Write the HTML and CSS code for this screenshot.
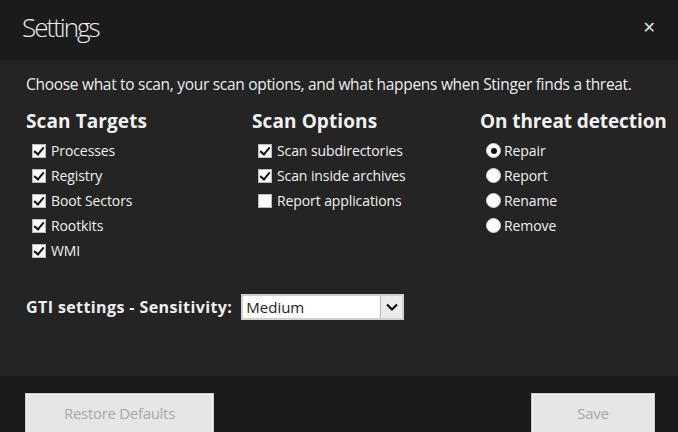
FILE: index.html
```html
<!DOCTYPE html>
<html>
<head>
<meta charset="utf-8">
<link rel="stylesheet" href="styles.css">
</head>
<body>
<div class="dialog">
  <header class="titlebar">
    <h1 class="title">Settings</h1>
    <span class="close">&#x2715;</span>
  </header>
  <main class="content">
    <p class="intro">Choose what to scan, your scan options, and what happens when Stinger finds a threat.</p>
    <div class="columns">
      <section class="col col-targets">
        <h2 class="col-title">Scan Targets</h2>
        <ul class="opts">
          <li class="opt"><span class="box checked"></span>Processes</li>
          <li class="opt"><span class="box checked"></span>Registry</li>
          <li class="opt"><span class="box checked"></span>Boot Sectors</li>
          <li class="opt"><span class="box checked"></span>Rootkits</li>
          <li class="opt"><span class="box checked"></span>WMI</li>
        </ul>
      </section>
      <section class="col col-options">
        <h2 class="col-title">Scan Options</h2>
        <ul class="opts">
          <li class="opt"><span class="box checked"></span>Scan subdirectories</li>
          <li class="opt"><span class="box checked"></span>Scan inside archives</li>
          <li class="opt"><span class="box"></span>Report applications</li>
        </ul>
      </section>
      <section class="col col-threat">
        <h2 class="col-title">On threat detection</h2>
        <ul class="opts">
          <li class="opt"><span class="radio selected"></span>Repair</li>
          <li class="opt"><span class="radio"></span>Report</li>
          <li class="opt"><span class="radio"></span>Rename</li>
          <li class="opt"><span class="radio"></span>Remove</li>
        </ul>
      </section>
    </div>
    <div class="gti">
      <span class="gti-label">GTI settings - Sensitivity:</span>
      <div class="select">
        <span class="select-value">Medium</span>
        <span class="select-btn"><svg width="14" height="10" viewBox="0 0 14 10"><path d="M2 2.5 L7 7.5 L12 2.5" fill="none" stroke="#111" stroke-width="2.2"/></svg></span>
      </div>
    </div>
  </main>
  <footer class="footer">
    <button class="btn btn-restore">Restore Defaults</button>
    <button class="btn btn-save">Save</button>
  </footer>
</div>
</body>
</html>
```

FILE: styles.css
```css
html, body {
  margin: 0;
  padding: 0;
  background: #1b1b1b;
}
body {
  width: 678px;
  height: 432px;
  overflow: hidden;
  font-family: "Open Sans", "DejaVu Sans", sans-serif;
  color: #f0f0f0;
}
.dialog {
  display: flex;
  flex-direction: column;
  height: 432px;
}
.titlebar {
  height: 60px;
  background: #1b1b1b;
  display: flex;
  align-items: center;
  justify-content: space-between;
  padding: 0 22px 0 22px;
  box-sizing: border-box;
  flex: none;
}
.title {
  margin: 0;
  font-weight: 300;
  font-size: 26px;
  letter-spacing: -2px;
  color: #ececec;
  position: relative;
  top: -3px;
}
.close {
  font-size: 16px;
  color: #e0e0e0;
  position: relative;
  top: -3px;
}
.content {
  height: 316px;
  background: #242424;
  padding: 14px 0 0 26px;
  box-sizing: border-box;
  flex: none;
}
.intro {
  margin: 0;
  font-size: 15.5px;
  letter-spacing: -0.3px;
  color: #ededed;
  line-height: 20px;
  white-space: nowrap;
}
.columns {
  display: flex;
  margin-top: 15px;
}
.col-targets { width: 226px; }
.col-options { width: 228px; }
.col-title {
  margin: 0 0 5px 0;
  font-size: 19px;
  font-weight: 700;
  line-height: 24px;
  color: #f2f2f2;
  letter-spacing: 0.1px;
  white-space: nowrap;
}
.col-threat .col-title { letter-spacing: -0.1px; }
.opts {
  list-style: none;
  margin: 0;
  padding: 0 0 0 6px;
}
.opt {
  display: flex;
  align-items: center;
  height: 25px;
  font-size: 14px;
  letter-spacing: -0.1px;
  color: #f0f0f0;
}
.box {
  width: 14px;
  height: 14px;
  background: #fff;
  border: 1px solid #bbb;
  box-sizing: border-box;
  margin-right: 5px;
  position: relative;
  flex: none;
}
.box.checked::after {
  content: "";
  position: absolute;
  left: 3px;
  top: 0px;
  width: 4px;
  height: 8px;
  border: solid #111;
  border-width: 0 2.5px 2.5px 0;
  transform: rotate(40deg);
}
.radio {
  width: 15px;
  height: 15px;
  border-radius: 50%;
  background: #fff;
  box-sizing: border-box;
  border: 1px solid #ccc;
  margin-right: 3px;
  position: relative;
  flex: none;
}
.radio.selected::after {
  content: "";
  position: absolute;
  left: 3.5px;
  top: 3.5px;
  width: 6px;
  height: 6px;
  border-radius: 50%;
  background: #111;
}
.gti {
  display: flex;
  align-items: center;
  margin-top: 31px;
}
.gti-label {
  font-size: 16px;
  font-weight: 700;
  color: #efefef;
  margin-right: 9px;
  letter-spacing: 0.4px;
  white-space: nowrap;
}
.select {
  width: 163px;
  height: 26px;
  background: #fff;
  border: 2px solid #d0d0d0;
  box-sizing: border-box;
  display: flex;
  align-items: center;
  justify-content: space-between;
}
.select-value {
  color: #222;
  font-size: 15px;
  padding-left: 3px;
}
.select-btn {
  width: 22px;
  height: 22px;
  background: #ececec;
  border-left: 1px solid #bbb;
  box-sizing: border-box;
  display: flex;
  align-items: center;
  justify-content: center;
}
.footer {
  flex: 1;
  background: #1b1b1b;
  display: flex;
  justify-content: space-between;
  align-items: flex-start;
  padding: 18px 24px 0 26px;
}
.btn {
  height: 42px;
  background: #e6e6e6;
  border: 1px solid #f4f4f4;
  outline: 1px solid #c8c8c8;
  font-family: "Open Sans", sans-serif;
  font-size: 15px;
  color: #a8a8a8;
  letter-spacing: -0.3px;
  padding: 0 0 4px 0;
}
.btn-restore { width: 187px; }
.btn-save { width: 122px; }
```
